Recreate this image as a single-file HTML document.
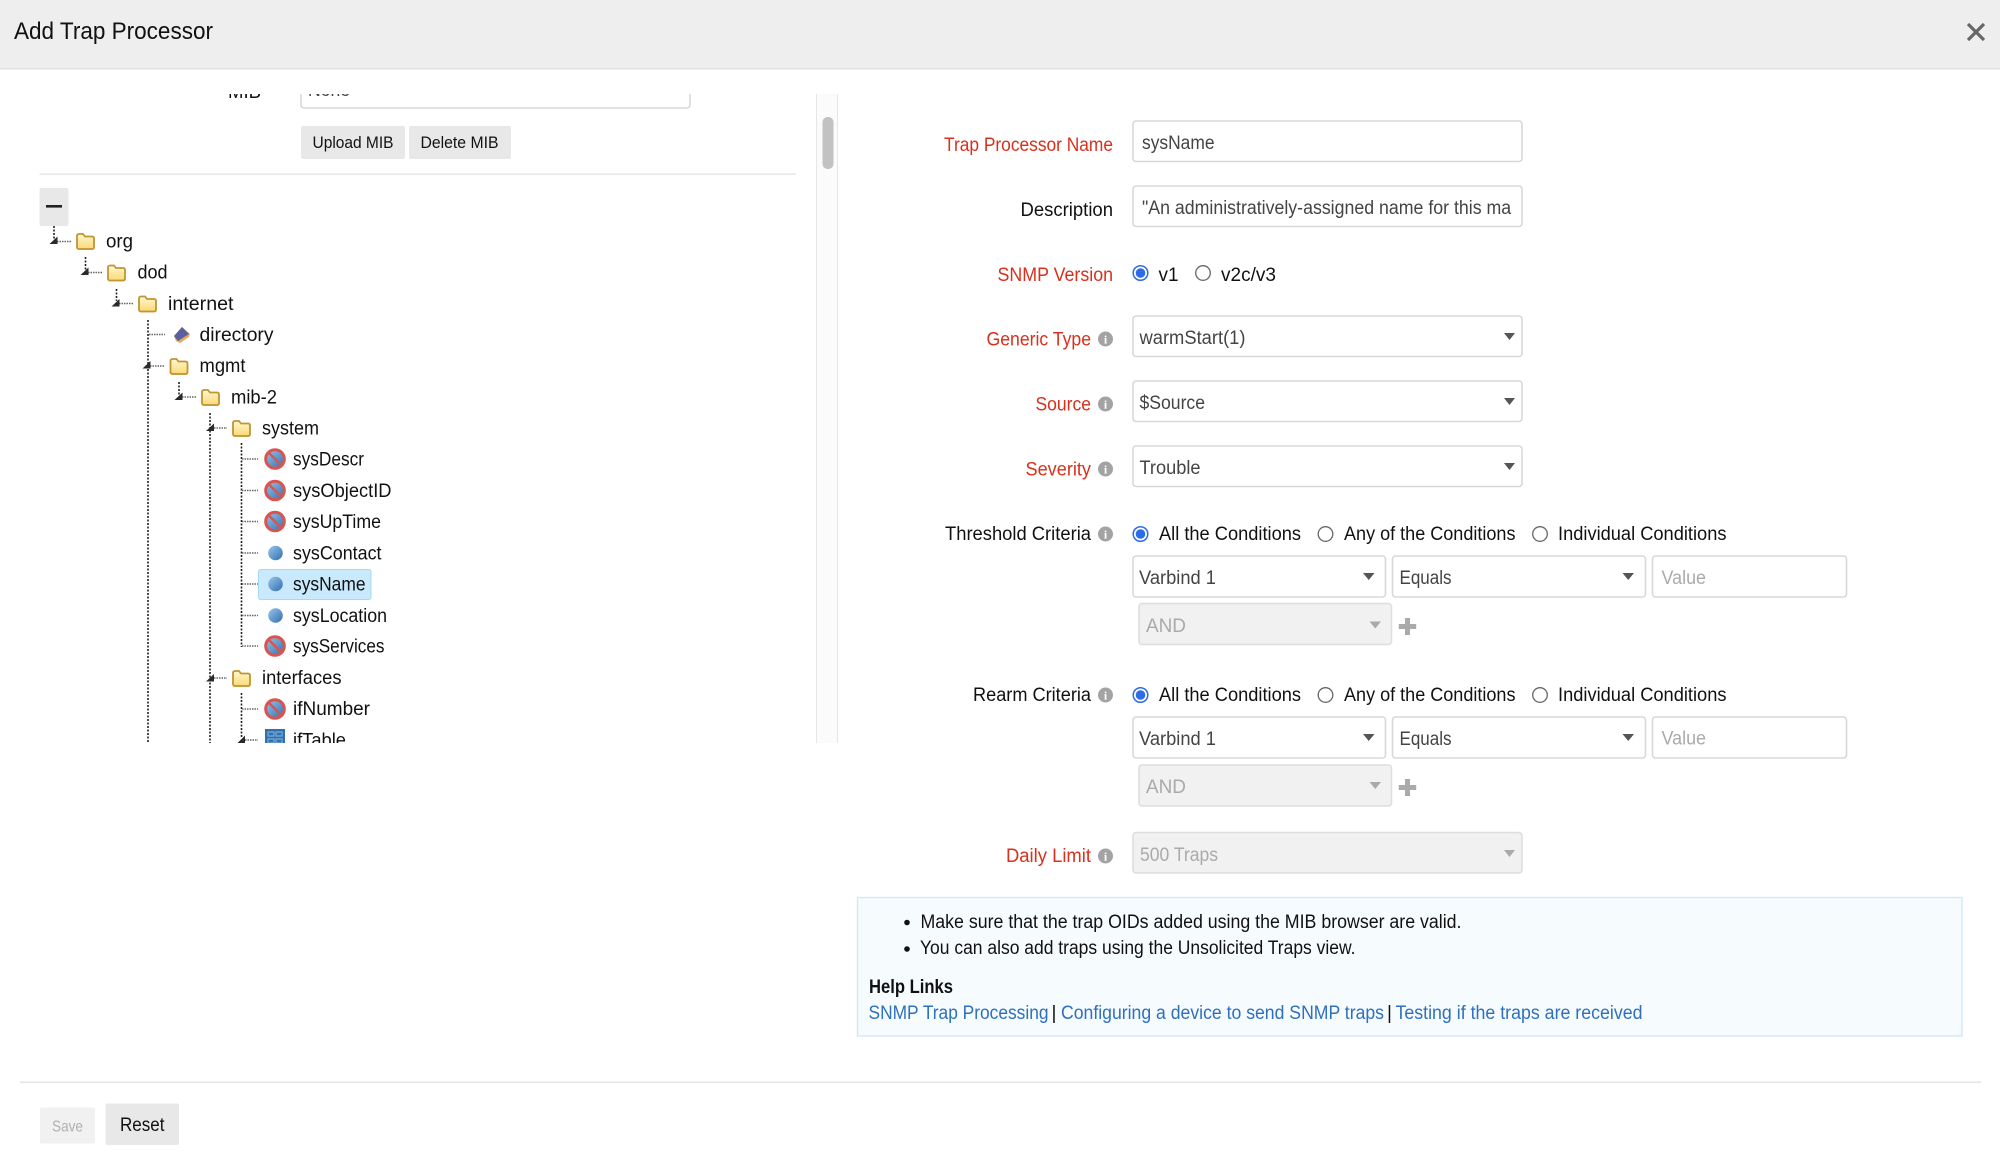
<!DOCTYPE html>
<html lang="en">
<head>
<meta charset="utf-8">
<title>Add Trap Processor</title>
<style>
html,body{margin:0;padding:0;background:#fff;width:2000px;height:1166px;overflow:hidden}
svg{display:block}
text{font-family:"Liberation Sans",sans-serif;font-size:19px;fill:#111}
.g{fill:#444}
.r{fill:#d8301c}
.d{fill:#aaa}
.l{fill:#2e70bd}
.b{stroke:#d8d8d8;stroke-width:1.6;fill:#fff}
.o{stroke:#dedede;stroke-width:1.6;fill:#f1f1f1}
.v{stroke:#222;stroke-width:1.6;stroke-dasharray:2 1.5;fill:none}
.h{stroke:#666;stroke-width:1.4;stroke-dasharray:1.5 1;fill:none}
.t{fill:#2a2a2a}
.a{fill:#555}
.ad{fill:#aaa}
.i{font-family:"Liberation Serif",serif;font-size:12px;font-weight:bold;fill:#fff;text-anchor:middle}
</style>
</head>
<body>
<svg width="2000" height="1166" viewBox="0 0 2000 1166" xmlns="http://www.w3.org/2000/svg">
<defs>
<linearGradient id="fg" x1="0" y1="0" x2="0" y2="1"><stop offset="0" stop-color="#fff8d0"/><stop offset="1" stop-color="#fbd976"/></linearGradient>
<linearGradient id="bg" x1="0" y1="0" x2="1" y2="1"><stop offset="0" stop-color="#9cc5ea"/><stop offset="1" stop-color="#2f6fb0"/></linearGradient>
<g id="f"><path d="M1.500 4Q1.500 2 3.500 2H7L9 4H16Q18 4 18 6V15Q18 17 16 17H3.500Q1.500 17 1.500 15Z" fill="#d9d2c0" opacity=".6"/><path d="M1 3Q1 1 3 1H7L9 3.500H16Q18 3.500 18 5.500V14Q18 16 16 16H3Q1 16 1 14Z" fill="url(#fg)" stroke="#c19434" stroke-width="1.800"/></g>
<g id="n"><circle cx="11" cy="11" r="9.300" fill="url(#bg)" stroke="#d9544e" stroke-width="3"/><path d="M4.500 4.500L17.500 17.500" stroke="#d9544e" stroke-width="2.400"/></g>
<g id="q"><circle cx="7.500" cy="7.500" r="7.300" fill="url(#bg)"/></g>
<clipPath id="pane"><rect x="0" y="94" width="838" height="649"/></clipPath>
<clipPath id="desc"><rect x="1136" y="186" width="376" height="40"/></clipPath>
</defs>

<!-- header -->
<rect x="0" y="0" width="2000" height="68" fill="#eee"/>
<rect x="0" y="68" width="2000" height="1.500" fill="#e2e2e2"/>
<text x="14" y="39" style="font-size:24px" textLength="199" lengthAdjust="spacingAndGlyphs">Add Trap Processor</text>
<path d="M1968 24L1984 40M1984 24L1968 40" stroke="#666" stroke-width="3.200" fill="none"/>

<!-- scrollbar -->
<rect x="816" y="94" width="21.500" height="649" fill="#fbfbfb"/>
<rect x="816" y="94" width="1" height="649" fill="#e6e6e6"/>
<rect x="837" y="94" width="1" height="649" fill="#e6e6e6"/>
<rect x="822.500" y="117" width="11" height="52" rx="5" fill="#c2c2c2"/>

<!-- left pane -->
<g clip-path="url(#pane)">
<text x="228" y="98" textLength="33" lengthAdjust="spacingAndGlyphs">MIB</text>
<rect x="301" y="70" width="389" height="38" rx="3" class="b"/>
<text x="308" y="96" class="g" textLength="42" lengthAdjust="spacingAndGlyphs">None</text>

<rect x="301" y="126" width="104" height="33" rx="2" fill="#e8e8e8"/>
<rect x="409" y="126" width="102" height="33" rx="2" fill="#e8e8e8"/>
<text x="312.500" y="148" style="font-size:17px" textLength="81" lengthAdjust="spacingAndGlyphs">Upload MIB</text>
<text x="420.500" y="148" style="font-size:17px" textLength="78" lengthAdjust="spacingAndGlyphs">Delete MIB</text>
<rect x="39.500" y="173.500" width="756.500" height="1.200" fill="#e0e0e0"/>

<rect x="39.500" y="188" width="29" height="38" rx="2" fill="#e8e8e8"/>
<rect x="46" y="205" width="16" height="2.600" fill="#222"/>

<!-- tree lines -->
<path class="v" d="M54 226V239M85.500 257V270M116.500 289V301M148 320V743M179 382V395M210 413V743M241.500 443V647M241.500 693V738"/>
<path class="h" d="M57 241.500H71M88 272.500H103M119 303.500H134M149 334.500H165M150 366H165M182 397H196M214 428H227M242 459H258M242 490.500H258M242 521.500H258M242 553H258M242 584H258M242 615.500H258M242 646H258M214 678H227M242 709H258M245 740H258"/>
<path class="t" d="M49.500 244H57.500V236.500ZM80.500 275H88.500V267.500ZM111.500 306.500H119.500V299ZM142.500 368.500H150.500V361ZM174.500 400H182.500V392.500ZM206 431H214V423.500ZM206 681.500H214V674ZM237 743.500H245V735.500Z"/>

<!-- selected row -->
<rect x="258.500" y="569.500" width="112.500" height="30" rx="2" fill="#c9e9fd" stroke="#aad8f2"/>

<!-- icons -->
<use href="#f" x="76" y="233"/>
<use href="#f" x="107" y="264.500"/>
<use href="#f" x="138" y="295.500"/>
<path d="M182 327L190 334L189 337L180 343L176 341L174 336Z" fill="#e5a95e"/><path d="M182 327L189 334L178 341L174 336Z" fill="#5a5f9f"/>
<use href="#f" x="169.500" y="358"/>
<use href="#f" x="201" y="389"/>
<use href="#f" x="232" y="420"/>
<use href="#f" x="232" y="670"/>
<use href="#n" x="264" y="448"/>
<use href="#n" x="264" y="479.500"/>
<use href="#n" x="264" y="510.500"/>
<use href="#q" x="268" y="545.500"/>
<use href="#q" x="268" y="576.500"/>
<use href="#q" x="268" y="608"/>
<use href="#n" x="264" y="635"/>
<use href="#n" x="264" y="698"/>
<rect x="265" y="729" width="20" height="20" fill="#2f72b2"/>
<path d="M268 732H274V736H268ZM276 732H282V736H276ZM268 739H274V743H268ZM276 739H282V743H276Z" fill="none" stroke="#7aa9d6" stroke-width="1.200"/>

<!-- tree labels -->
<text x="106" y="247.500" textLength="27" lengthAdjust="spacingAndGlyphs">org</text>
<text x="137.500" y="278.500" textLength="30" lengthAdjust="spacingAndGlyphs">dod</text>
<text x="168" y="310" textLength="65.500" lengthAdjust="spacingAndGlyphs">internet</text>
<text x="199.500" y="341" textLength="74" lengthAdjust="spacingAndGlyphs">directory</text>
<text x="199.500" y="372" textLength="46" lengthAdjust="spacingAndGlyphs">mgmt</text>
<text x="231" y="403.500" textLength="46" lengthAdjust="spacingAndGlyphs">mib-2</text>
<text x="262" y="434.500" textLength="57" lengthAdjust="spacingAndGlyphs">system</text>
<text x="293" y="465.500" textLength="71" lengthAdjust="spacingAndGlyphs">sysDescr</text>
<text x="293" y="497" textLength="98.500" lengthAdjust="spacingAndGlyphs">sysObjectID</text>
<text x="293" y="528" textLength="88" lengthAdjust="spacingAndGlyphs">sysUpTime</text>
<text x="293" y="559.500" textLength="88.500" lengthAdjust="spacingAndGlyphs">sysContact</text>
<text x="293" y="590.500" textLength="72.500" lengthAdjust="spacingAndGlyphs">sysName</text>
<text x="293" y="622" textLength="94" lengthAdjust="spacingAndGlyphs">sysLocation</text>
<text x="293" y="652.500" textLength="91.500" lengthAdjust="spacingAndGlyphs">sysServices</text>
<text x="262" y="684" textLength="79.500" lengthAdjust="spacingAndGlyphs">interfaces</text>
<text x="293" y="715" textLength="77" lengthAdjust="spacingAndGlyphs">ifNumber</text>
<text x="293" y="746.500" textLength="53" lengthAdjust="spacingAndGlyphs">ifTable</text>
</g>

<!-- form: labels -->
<text x="944" y="151" class="r" textLength="169" lengthAdjust="spacingAndGlyphs">Trap Processor Name</text>
<text x="1020.500" y="216" textLength="92.500" lengthAdjust="spacingAndGlyphs">Description</text>
<text x="997.500" y="281" class="r" textLength="115.500" lengthAdjust="spacingAndGlyphs">SNMP Version</text>
<text x="986.500" y="345.500" class="r" textLength="104.500" lengthAdjust="spacingAndGlyphs">Generic Type</text>
<text x="1035.500" y="410.500" class="r" textLength="55.500" lengthAdjust="spacingAndGlyphs">Source</text>
<text x="1025.500" y="475.500" class="r" textLength="65.500" lengthAdjust="spacingAndGlyphs">Severity</text>
<text x="945" y="540" textLength="146" lengthAdjust="spacingAndGlyphs">Threshold Criteria</text>
<text x="973" y="701" textLength="118" lengthAdjust="spacingAndGlyphs">Rearm Criteria</text>
<text x="1006" y="862" class="r" textLength="85" lengthAdjust="spacingAndGlyphs">Daily Limit</text>

<!-- info icons -->
<g fill="#a3a3a3">
<circle cx="1105.500" cy="339" r="7.500"/><circle cx="1105.500" cy="404" r="7.500"/><circle cx="1105.500" cy="469" r="7.500"/>
<circle cx="1105.500" cy="534" r="7.500"/><circle cx="1105.500" cy="695" r="7.500"/><circle cx="1105.500" cy="856" r="7.500"/>
</g>
<text x="1105.500" y="343.500" class="i">i</text><text x="1105.500" y="408.500" class="i">i</text><text x="1105.500" y="473.500" class="i">i</text>
<text x="1105.500" y="538.500" class="i">i</text><text x="1105.500" y="699.500" class="i">i</text><text x="1105.500" y="860.500" class="i">i</text>

<!-- inputs -->
<rect x="1133" y="121" width="389" height="40.500" rx="3" class="b"/>
<rect x="1133" y="186" width="389" height="40.500" rx="3" class="b"/>
<text x="1142" y="149" class="g" textLength="72.500" lengthAdjust="spacingAndGlyphs">sysName</text>
<g clip-path="url(#desc)"><text x="1142" y="214" class="g" textLength="379" lengthAdjust="spacingAndGlyphs">"An administratively-assigned name for this man</text></g>

<!-- SNMP version -->
<circle cx="1140.500" cy="273" r="7.300" fill="#fff" stroke="#2c6bea" stroke-width="1.500"/><circle cx="1140.500" cy="273" r="4.800" fill="#2c6bea"/>
<circle cx="1203" cy="273" r="7.300" fill="#fff" stroke="#666" stroke-width="1.300"/>
<text x="1158.500" y="281" textLength="20" lengthAdjust="spacingAndGlyphs">v1</text>
<text x="1221" y="281" textLength="55" lengthAdjust="spacingAndGlyphs">v2c/v3</text>

<!-- selects -->
<rect x="1133" y="316" width="389" height="40.500" rx="3" class="b"/>
<rect x="1133" y="381" width="389" height="40.500" rx="3" class="b"/>
<rect x="1133" y="446" width="389" height="40.500" rx="3" class="b"/>
<text x="1139.500" y="344" class="g" textLength="106" lengthAdjust="spacingAndGlyphs">warmStart(1)</text>
<text x="1139.500" y="409" class="g" textLength="65.500" lengthAdjust="spacingAndGlyphs">$Source</text>
<text x="1139.500" y="474" class="g" textLength="61" lengthAdjust="spacingAndGlyphs">Trouble</text>
<path class="a" d="M1504 333H1515L1509.500 340ZM1504 398H1515L1509.500 405ZM1504 463H1515L1509.500 470Z"/>

<!-- threshold criteria -->
<circle cx="1140.500" cy="534" r="7.300" fill="#fff" stroke="#2c6bea" stroke-width="1.500"/><circle cx="1140.500" cy="534" r="4.800" fill="#2c6bea"/>
<circle cx="1325.500" cy="534" r="7.300" fill="#fff" stroke="#666" stroke-width="1.300"/>
<circle cx="1540" cy="534" r="7.300" fill="#fff" stroke="#666" stroke-width="1.300"/>
<text x="1159" y="540" textLength="142" lengthAdjust="spacingAndGlyphs">All the Conditions</text>
<text x="1344" y="540" textLength="171.500" lengthAdjust="spacingAndGlyphs">Any of the Conditions</text>
<text x="1558" y="540" textLength="168.500" lengthAdjust="spacingAndGlyphs">Individual Conditions</text>

<rect x="1133" y="556" width="252.500" height="41" rx="3" class="b"/>
<rect x="1392.500" y="556" width="253" height="41" rx="3" class="b"/>
<rect x="1652.500" y="556" width="194" height="41" rx="3" class="b"/>
<text x="1139" y="584" class="g" textLength="77" lengthAdjust="spacingAndGlyphs">Varbind 1</text>
<text x="1399.500" y="584" class="g" textLength="52" lengthAdjust="spacingAndGlyphs">Equals</text>
<text x="1661.500" y="584" class="d" textLength="44.500" lengthAdjust="spacingAndGlyphs">Value</text>
<path class="a" d="M1363 573H1374.500L1368.750 580ZM1622.500 573H1634L1628.250 580Z"/>

<rect x="1139" y="603.500" width="252.500" height="41" rx="3" class="o"/>
<text x="1146" y="632" class="d" textLength="40" lengthAdjust="spacingAndGlyphs">AND</text>
<path class="ad" d="M1369.500 621.500H1381L1375.250 628.500Z"/>
<path d="M1398.800 626.500H1416.200M1407.500 618V635" stroke="#aaa" stroke-width="5" fill="none"/>

<!-- rearm criteria -->
<circle cx="1140.500" cy="695" r="7.300" fill="#fff" stroke="#2c6bea" stroke-width="1.500"/><circle cx="1140.500" cy="695" r="4.800" fill="#2c6bea"/>
<circle cx="1325.500" cy="695" r="7.300" fill="#fff" stroke="#666" stroke-width="1.300"/>
<circle cx="1540" cy="695" r="7.300" fill="#fff" stroke="#666" stroke-width="1.300"/>
<text x="1159" y="701" textLength="142" lengthAdjust="spacingAndGlyphs">All the Conditions</text>
<text x="1344" y="701" textLength="171.500" lengthAdjust="spacingAndGlyphs">Any of the Conditions</text>
<text x="1558" y="701" textLength="168.500" lengthAdjust="spacingAndGlyphs">Individual Conditions</text>

<rect x="1133" y="717" width="252.500" height="41" rx="3" class="b"/>
<rect x="1392.500" y="717" width="253" height="41" rx="3" class="b"/>
<rect x="1652.500" y="717" width="194" height="41" rx="3" class="b"/>
<text x="1139" y="745" class="g" textLength="77" lengthAdjust="spacingAndGlyphs">Varbind 1</text>
<text x="1399.500" y="745" class="g" textLength="52" lengthAdjust="spacingAndGlyphs">Equals</text>
<text x="1661.500" y="744.500" class="d" textLength="44.500" lengthAdjust="spacingAndGlyphs">Value</text>
<path class="a" d="M1363 734H1374.500L1368.750 741ZM1622.500 734H1634L1628.250 741Z"/>

<rect x="1139" y="765" width="252.500" height="41" rx="3" class="o"/>
<text x="1146" y="793" class="d" textLength="40" lengthAdjust="spacingAndGlyphs">AND</text>
<path class="ad" d="M1369.500 782H1381L1375.250 789Z"/>
<path d="M1398.800 787.500H1416.200M1407.500 779V796" stroke="#aaa" stroke-width="5" fill="none"/>

<!-- daily limit -->
<rect x="1133" y="832.500" width="389" height="40.500" rx="3" class="o"/>
<text x="1140" y="861" class="d" textLength="78" lengthAdjust="spacingAndGlyphs">500 Traps</text>
<path class="ad" d="M1504 850H1515L1509.500 857Z"/>

<!-- info box -->
<rect x="857.500" y="897.500" width="1104.500" height="138.500" fill="#f6fbfe" stroke="#cfe8f8" stroke-width="1.300"/>
<circle cx="907" cy="922.500" r="2.800" fill="#111"/>
<circle cx="907" cy="949" r="2.800" fill="#111"/>
<text x="920.500" y="928" textLength="541" lengthAdjust="spacingAndGlyphs">Make sure that the trap OIDs added using the MIB browser are valid.</text>
<text x="920" y="954" textLength="435.500" lengthAdjust="spacingAndGlyphs">You can also add traps using the Unsolicited Traps view.</text>
<text x="869" y="993" style="font-weight:bold" textLength="84" lengthAdjust="spacingAndGlyphs">Help Links</text>
<text x="868.500" y="1019" class="l" textLength="180" lengthAdjust="spacingAndGlyphs">SNMP Trap Processing</text>
<text x="1051.500" y="1019">|</text>
<text x="1061" y="1019" class="l" textLength="323" lengthAdjust="spacingAndGlyphs">Configuring a device to send SNMP traps</text>
<text x="1387" y="1019">|</text>
<text x="1395.500" y="1019" class="l" textLength="247" lengthAdjust="spacingAndGlyphs">Testing if the traps are received</text>

<!-- footer -->
<rect x="20" y="1081.500" width="1961.500" height="1.300" fill="#e0e0e0"/>
<rect x="40" y="1107.500" width="55" height="36" rx="2" fill="#f1f1f1"/>
<text x="52" y="1131.500" style="font-size:16px;fill:#b0b0b0" textLength="31" lengthAdjust="spacingAndGlyphs">Save</text>
<rect x="105.500" y="1103.500" width="73.500" height="41.500" rx="2" fill="#e8e8e8"/>
<text x="120" y="1131" textLength="44.500" lengthAdjust="spacingAndGlyphs">Reset</text>
</svg>
</body>
</html>
